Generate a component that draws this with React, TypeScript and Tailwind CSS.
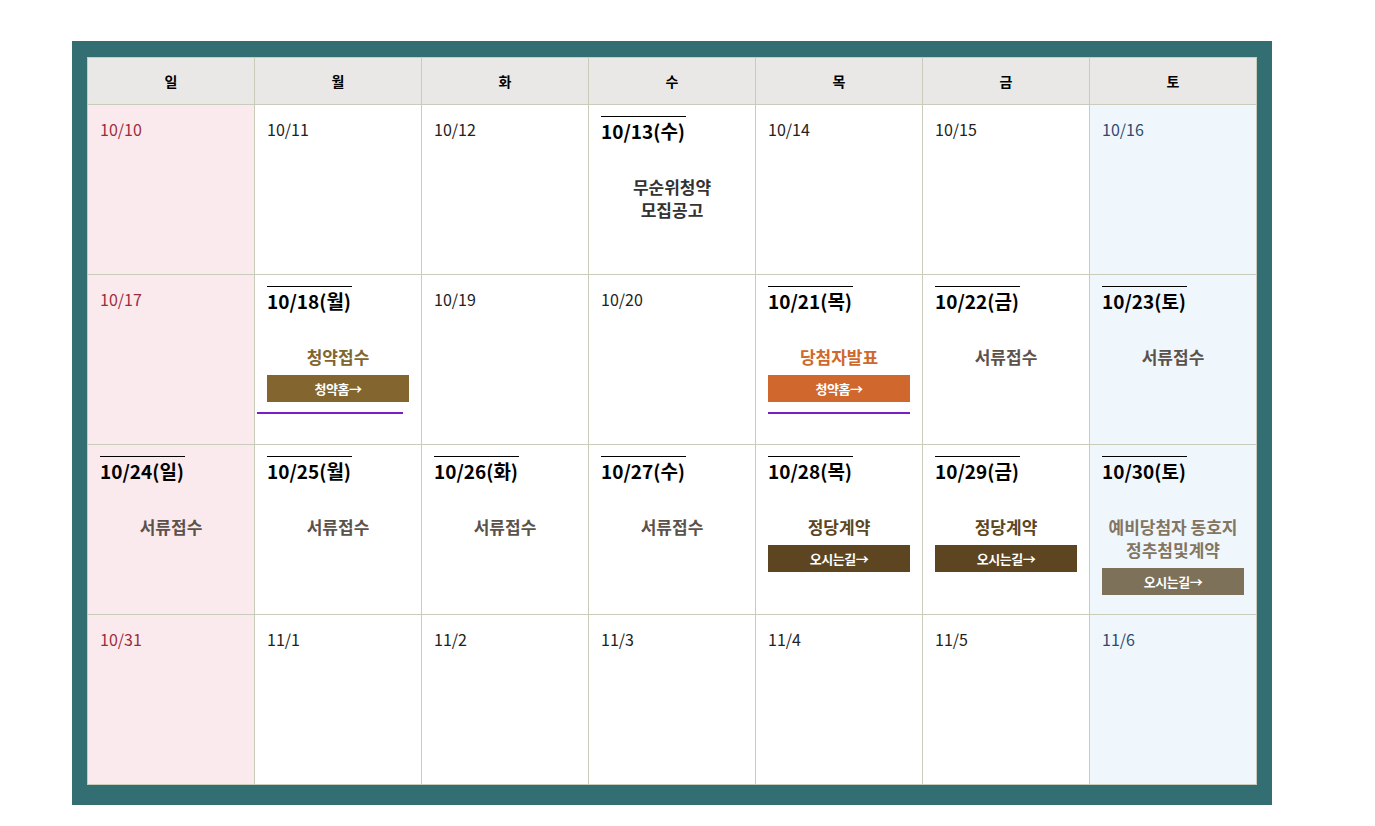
import React from "react";

type Ev = {
  lines: string[];
  color: string;
  btn?: { label: string; bg: string };
  underline?: "wide" | "normal";
};

type Day = {
  label: string;
  strong?: boolean;
  ev?: Ev;
};

const WEEK = ["일", "월", "화", "수", "목", "금", "토"];

const DOCS: Ev = { lines: ["서류접수"], color: "text-[#5b524c]" };

const ROWS: Day[][] = [
  [
    { label: "10/10" },
    { label: "10/11" },
    { label: "10/12" },
    { label: "10/13(수)", strong: true, ev: { lines: ["무순위청약", "모집공고"], color: "text-[#333333]" } },
    { label: "10/14" },
    { label: "10/15" },
    { label: "10/16" },
  ],
  [
    { label: "10/17" },
    {
      label: "10/18(월)",
      strong: true,
      ev: { lines: ["청약접수"], color: "text-[#80652f]", btn: { label: "청약홈→", bg: "bg-[#82652f]" }, underline: "wide" },
    },
    { label: "10/19" },
    { label: "10/20" },
    {
      label: "10/21(목)",
      strong: true,
      ev: { lines: ["당첨자발표"], color: "text-[#d0672c]", btn: { label: "청약홈→", bg: "bg-[#d0672c]" }, underline: "normal" },
    },
    { label: "10/22(금)", strong: true, ev: DOCS },
    { label: "10/23(토)", strong: true, ev: DOCS },
  ],
  [
    { label: "10/24(일)", strong: true, ev: DOCS },
    { label: "10/25(월)", strong: true, ev: DOCS },
    { label: "10/26(화)", strong: true, ev: DOCS },
    { label: "10/27(수)", strong: true, ev: DOCS },
    {
      label: "10/28(목)",
      strong: true,
      ev: { lines: ["정당계약"], color: "text-[#5c4622]", btn: { label: "오시는길→", bg: "bg-[#5c4520]" } },
    },
    {
      label: "10/29(금)",
      strong: true,
      ev: { lines: ["정당계약"], color: "text-[#5c4622]", btn: { label: "오시는길→", bg: "bg-[#5c4520]" } },
    },
    {
      label: "10/30(토)",
      strong: true,
      ev: { lines: ["예비당첨자 동호지", "정추첨및계약"], color: "text-[#837561]", btn: { label: "오시는길→", bg: "bg-[#7e7159]" } },
    },
  ],
  [
    { label: "10/31" },
    { label: "11/1" },
    { label: "11/2" },
    { label: "11/3" },
    { label: "11/4" },
    { label: "11/5" },
    { label: "11/6" },
  ],
];

function Cell({ day, col }: { day: Day; col: number }) {
  const bg = col === 0 ? "bg-[#fbeaed]" : col === 6 ? "bg-[#eff7fd]" : "bg-white";
  const plain = col === 0 ? "text-[#9c2c3c]" : col === 6 ? "text-[#2f4a70]" : "text-[#222222]";
  return (
    <div className={`h-[170px] border-r border-b border-[#c9ccbb] px-[12px] ${bg}`}>
      {day.strong ? (
        <div className="pt-[11px]">
          <span className="inline-block border-t border-black pr-[1px] text-[19px] font-bold leading-[28px] text-black">
            {day.label}
          </span>
        </div>
      ) : (
        <div className={`pt-[12px] text-[16px] leading-[24px] ${plain}`}>{day.label}</div>
      )}
      {day.ev && (
        <div className="mt-[30px] flex flex-col items-center">
          {day.ev.lines.map((l) => (
            <div key={l} className={`text-[17px] font-bold leading-[23px] ${day.ev!.color}`}>
              {l}
            </div>
          ))}
          {day.ev.btn && (
            <div
              className={`mt-[7px] flex h-[27px] w-[142px] items-center justify-center text-[13px] font-bold tracking-[-0.5px] text-white ${day.ev.btn.bg}`}
            >
              {day.ev.btn.label}
            </div>
          )}
          {day.ev.underline === "wide" && <div className="mt-[10px] ml-[-10px] h-[2px] w-[146px] self-start bg-[#7a1dc4]" />}
          {day.ev.underline === "normal" && <div className="mt-[10px] h-[2px] w-[142px] bg-[#7a1dc4]" />}
        </div>
      )}
    </div>
  );
}

export default function App() {
  return (
    <div
      className="min-h-[826px] bg-white pt-[41px] pl-[72px]"
      style={{ fontFamily: '"Noto Sans CJK KR", "Noto Sans", sans-serif' }}
    >
      <div className="w-[1200px] bg-[#336e73] pt-[16px] pr-[15px] pb-[20px] pl-[15px]">
        <div className="grid w-[1170px] grid-cols-7 border-t border-l border-[#c9ccbb]">
          {WEEK.map((w) => (
            <div
              key={w}
              className="flex h-[47px] items-center justify-center border-r border-b border-[#c9ccbb] bg-[#e9e8e6] text-[14px] font-bold text-black"
            >
              {w}
            </div>
          ))}
          {ROWS.map((row, ri) =>
            row.map((d, ci) => <Cell key={`${ri}-${ci}`} day={d} col={ci} />)
          )}
        </div>
      </div>
    </div>
  );
}
